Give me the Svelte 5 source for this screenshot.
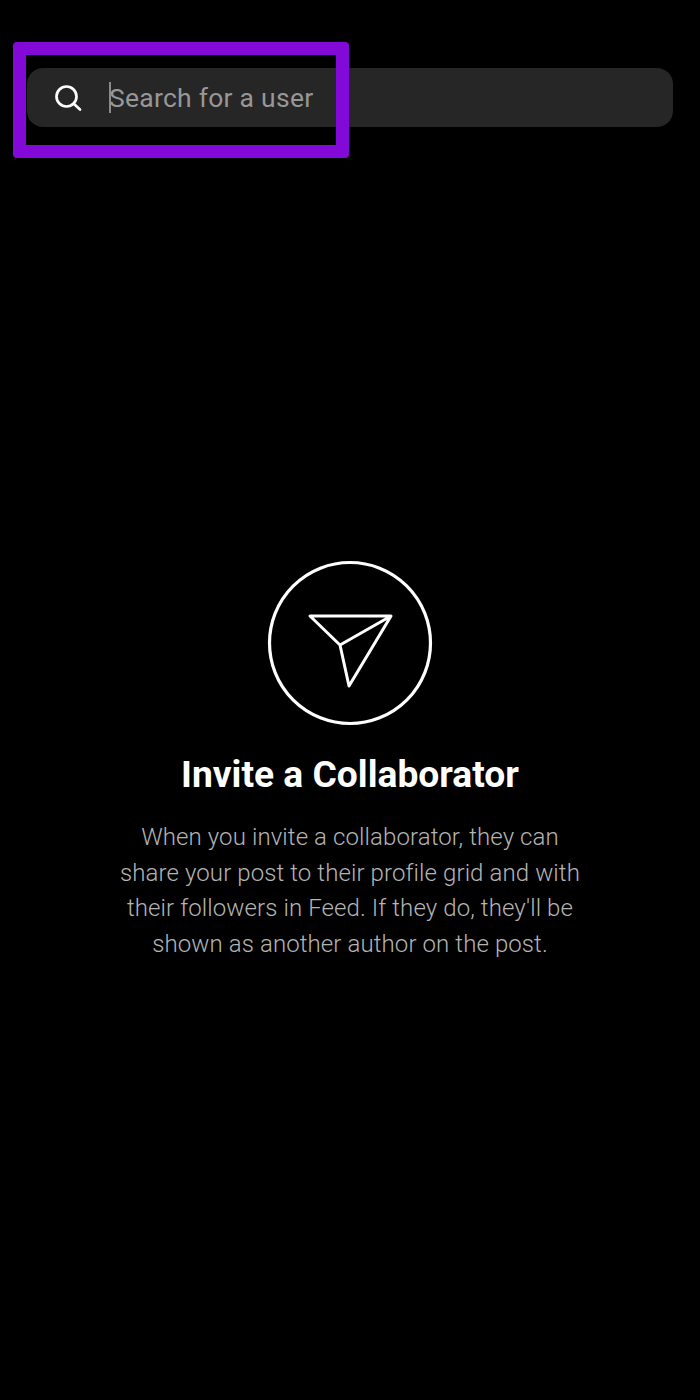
<script>
  const title = "Invite a Collaborator";
  const lines = [
    "When you invite a collaborator, they can",
    "share your post to their profile grid and with",
    "their followers in Feed. If they do, they'll be",
    "shown as another author on the post."
  ];
</script>

<main>
  <div class="search">
    <svg class="search-icon" width="30" height="30" viewBox="0 0 30 30" fill="none" stroke="#fff" stroke-width="2.7" stroke-linecap="round">
      <circle cx="13.5" cy="13.5" r="10" />
      <path d="M21 21l6 5.5" />
    </svg>
    <span class="caret"></span>
    <span class="placeholder">Search for a user</span>
    <div class="highlight"></div>
  </div>

  <section class="empty">
    <svg class="plane" width="166" height="166" viewBox="0 0 166 166" fill="none" stroke="#fff">
      <circle cx="83" cy="83" r="80.5" stroke-width="3.2" />
      <path d="M43 56H124L82 126L73 85ZM73 85L124 56" stroke-width="3" stroke-linejoin="round" />
    </svg>
    <h1>{title}</h1>
    <p>
      {#each lines as line}
        <span>{line}</span>
      {/each}
    </p>
  </section>
</main>

<style>
  :global(body) {
    background: #000;
  }

  main {
    width: 700px;
    height: 1400px;
    background: #000;
    padding: 68px 27px 0;
    box-sizing: border-box;
    font-family: Roboto, "Liberation Sans", sans-serif;
    overflow: hidden;
  }

  .search {
    position: relative;
    display: flex;
    align-items: center;
    height: 59px;
    padding-left: 26px;
    background: #262626;
    border-radius: 16px;
  }

  .search-icon {
    flex: none;
  }

  .caret {
    flex: none;
    width: 1.5px;
    height: 31px;
    margin: 0 -1.5px 0 26px;
    background: #8a8a8a;
  }

  .placeholder {
    font-size: 26.5px;
    letter-spacing: 0.25px;
    color: #979797;
  }

  .highlight {
    position: absolute;
    left: -14px;
    top: -26px;
    width: 336px;
    height: 116px;
    box-sizing: border-box;
    border: 13px solid #8209d8;
    border-radius: 4px;
  }

  .empty {
    display: flex;
    flex-direction: column;
    align-items: center;
    margin-top: 433px;
  }

  h1 {
    margin: 24px 0 0;
    font-size: 37.2px;
    font-weight: 700;
    line-height: 48px;
    color: #fff;
    white-space: nowrap;
  }

  p {
    margin: 22.3px 0 0;
    text-align: center;
    font-size: 24px;
    letter-spacing: 0.1px;
    font-weight: 300;
    line-height: 35.5px;
    color: #b4b4b4;
    white-space: nowrap;
  }

  p span {
    display: block;
  }
</style>
